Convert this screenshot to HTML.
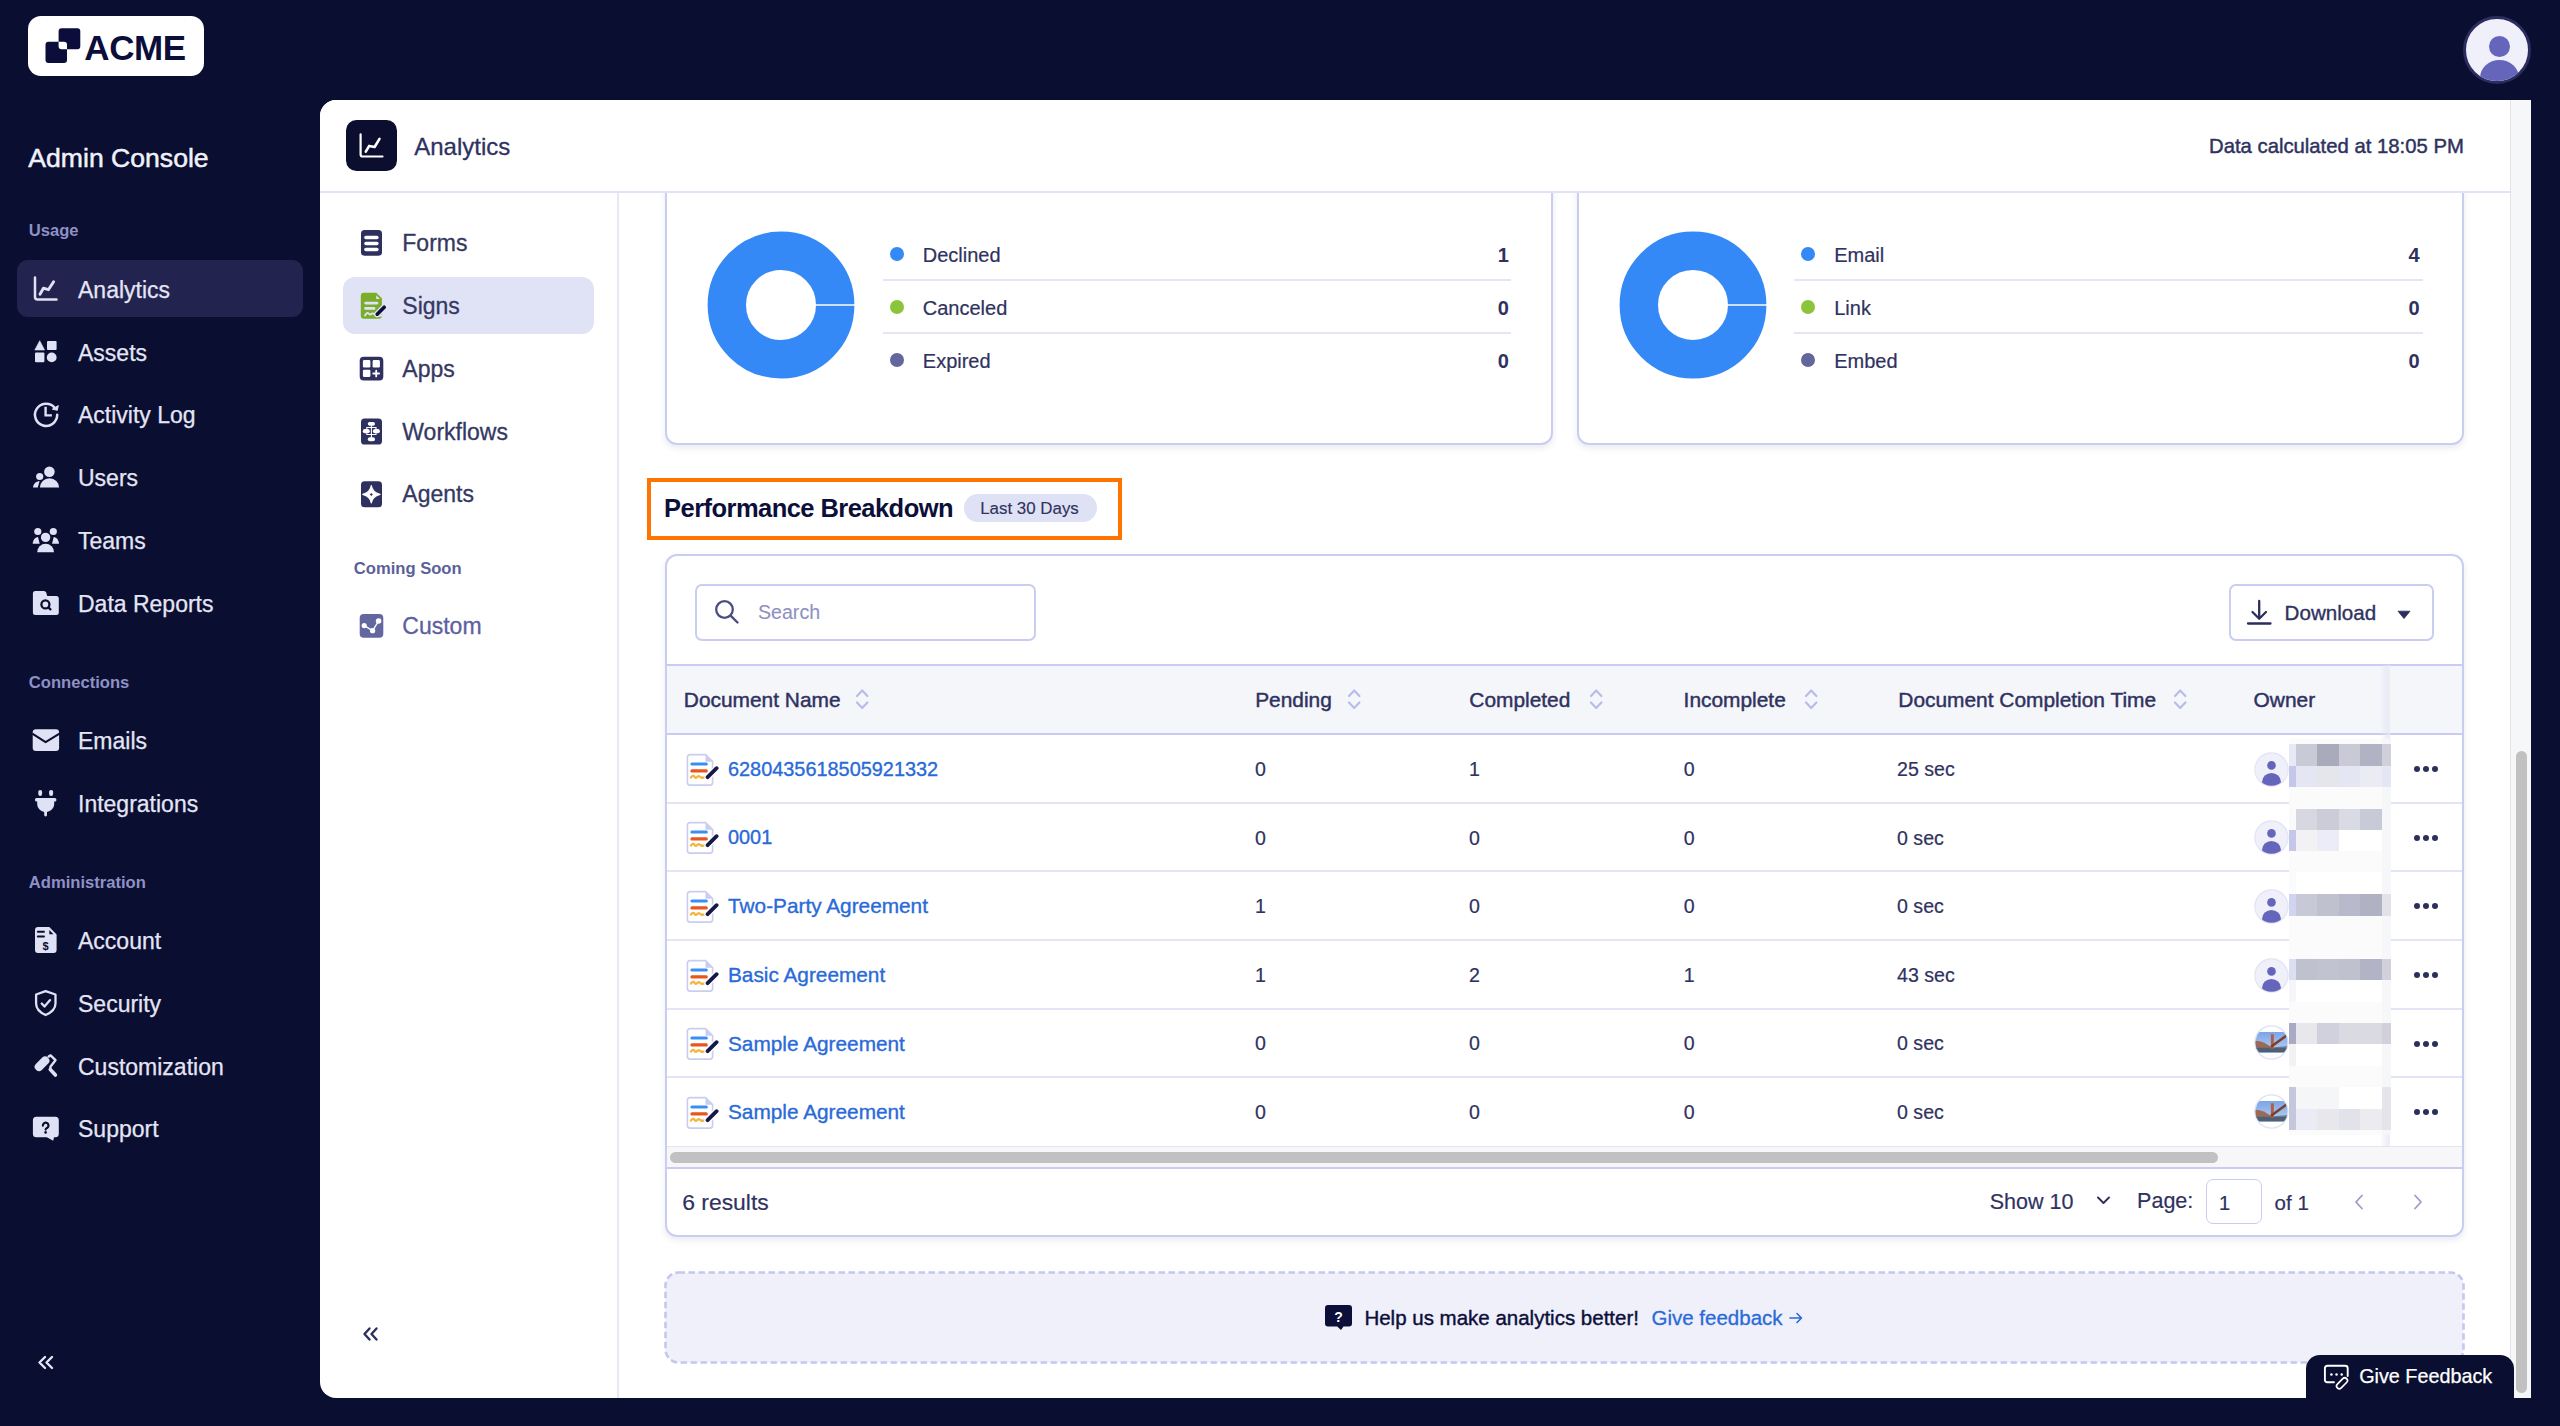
<!DOCTYPE html>
<html><head><meta charset="utf-8">
<style>
*{box-sizing:border-box;margin:0;padding:0}
html,body{width:2560px;height:1426px;overflow:hidden;background:#0a0e30;font-family:"Liberation Sans",sans-serif}
.a{position:absolute}
.t{position:absolute;white-space:nowrap;line-height:1}
</style></head><body>

<div class="a" style="left:28.00px;top:16.00px;width:176.00px;height:60.00px;background:#fff;border-radius:13px;"></div>
<svg class="a" style="left:40px;top:24px" width="50" height="46" viewBox="0 0 50 46"><path fill-rule="evenodd" fill="#0b0e3a" d="M21.6 4.3h15.7a3 3 0 0 1 3 3v15a3 3 0 0 1-3 3h-15.7a3 3 0 0 1-3-3v-15a3 3 0 0 1 3-3z M8.5 17.7h15.5a3 3 0 0 1 3 3v15.3a3 3 0 0 1-3 3h-15.5a3 3 0 0 1-3-3v-15.3a3 3 0 0 1 3-3z"/></svg>
<div class="t " style="top:29.75px;font-size:35px;color:#0b0e3a;left:84.30px;font-weight:700;letter-spacing:-0.4px;">ACME</div>
<div class="a" style="left:2463px;top:16px;width:68px;height:68px;border-radius:50%;background:#f0f0fa;border:3px solid #2c2c5e;overflow:hidden">
  <div class="a" style="left:23px;top:17px;width:21px;height:21px;border-radius:50%;background:#6465bb"></div>
  <div class="a" style="left:14px;top:41px;width:39px;height:36px;border-radius:50%;background:#6465bb"></div>
</div>
<div class="t " style="top:144.70px;font-size:26.6px;color:#f1f1fb;left:28.30px;-webkit-text-stroke:0.5px #f1f1fb;">Admin Console</div>
<div class="t " style="top:223.40px;font-size:16.6px;color:#8f91c6;left:28.80px;font-weight:700;">Usage</div>
<div class="a" style="left:17.00px;top:260.00px;width:286.00px;height:57.00px;background:#22244f;border-radius:11px;"></div>
<div class="t " style="top:278.79px;font-size:23px;color:#e4e5f6;left:78.00px;-webkit-text-stroke:0.25px #e4e5f6;">Analytics</div>
<div class="t " style="top:341.63px;font-size:23px;color:#e4e5f6;left:78.00px;-webkit-text-stroke:0.25px #e4e5f6;">Assets</div>
<div class="t " style="top:404.47px;font-size:23px;color:#e4e5f6;left:78.00px;-webkit-text-stroke:0.25px #e4e5f6;">Activity Log</div>
<div class="t " style="top:467.31px;font-size:23px;color:#e4e5f6;left:78.00px;-webkit-text-stroke:0.25px #e4e5f6;">Users</div>
<div class="t " style="top:530.15px;font-size:23px;color:#e4e5f6;left:78.00px;-webkit-text-stroke:0.25px #e4e5f6;">Teams</div>
<div class="t " style="top:592.99px;font-size:23px;color:#e4e5f6;left:78.00px;-webkit-text-stroke:0.25px #e4e5f6;">Data Reports</div>
<div class="t " style="top:675.10px;font-size:16.6px;color:#8f91c6;left:28.80px;font-weight:700;">Connections</div>
<div class="t " style="top:730.09px;font-size:23px;color:#e4e5f6;left:78.00px;-webkit-text-stroke:0.25px #e4e5f6;">Emails</div>
<div class="t " style="top:793.19px;font-size:23px;color:#e4e5f6;left:78.00px;-webkit-text-stroke:0.25px #e4e5f6;">Integrations</div>
<div class="t " style="top:875.00px;font-size:16.6px;color:#8f91c6;left:28.80px;font-weight:700;">Administration</div>
<div class="t " style="top:930.19px;font-size:23px;color:#e4e5f6;left:78.00px;-webkit-text-stroke:0.25px #e4e5f6;">Account</div>
<div class="t " style="top:992.89px;font-size:23px;color:#e4e5f6;left:78.00px;-webkit-text-stroke:0.25px #e4e5f6;">Security</div>
<div class="t " style="top:1055.59px;font-size:23px;color:#e4e5f6;left:78.00px;-webkit-text-stroke:0.25px #e4e5f6;">Customization</div>
<div class="t " style="top:1118.29px;font-size:23px;color:#e4e5f6;left:78.00px;-webkit-text-stroke:0.25px #e4e5f6;">Support</div>
<svg class="a" style="left:26px;top:270px" width="40" height="40" viewBox="0 0 40 40"><path d="M9 7.5V27a2.5 2.5 0 0 0 2.5 2.5H30.5" fill="none" stroke="#dfe1f4" stroke-width="2.5" stroke-linecap="round"/><path d="M14 24.3L17.4 18.2L22.4 19.7L27.6 11.8" fill="none" stroke="#dfe1f4" stroke-width="2.9" stroke-linecap="round" stroke-linejoin="round"/></svg>
<svg class="a" style="left:26px;top:333px" width="40" height="40" viewBox="0 0 40 40"><path d="M13.7 7.7L18.6 17H8.8Z" fill="#dfe1f4" stroke="#dfe1f4" stroke-width="0.6" stroke-linejoin="round"/><rect x="21" y="7.9" width="9.6" height="9.2" rx="1" fill="#dfe1f4"/><rect x="9" y="19.6" width="9.4" height="9.6" rx="1" fill="#dfe1f4"/><circle cx="25.7" cy="24.4" r="4.9" fill="#dfe1f4"/></svg>
<svg class="a" style="left:26px;top:396px" width="40" height="40" viewBox="0 0 40 40"><path d="M31.2 18.8A11.1 11.1 0 1 1 28.4 11.4" fill="none" stroke="#dfe1f4" stroke-width="2.5" stroke-linecap="round"/><path d="M32.3 9.6L31.3 14.3L26.4 13.2Z" fill="#dfe1f4" stroke="#dfe1f4" stroke-width="1" stroke-linejoin="round"/><path d="M19.6 12V19.4H24.7" fill="none" stroke="#dfe1f4" stroke-width="2.4" stroke-linecap="square"/></svg>
<svg class="a" style="left:26px;top:459px" width="40" height="40" viewBox="0 0 40 40"><circle cx="23.4" cy="12.8" r="5.3" fill="#dfe1f4"/><path d="M13.9 28.6A9.6 9.4 0 0 1 33.1 28.6Z" fill="#dfe1f4"/><circle cx="13.7" cy="17.5" r="3.6" fill="#dfe1f4"/><path d="M7 28.6C7.3 25 9.8 22.5 13.6 22.1L11.8 28.6Z" fill="#dfe1f4"/></svg>
<svg class="a" style="left:26px;top:522px" width="40" height="40" viewBox="0 0 40 40"><circle cx="11.8" cy="9.5" r="3.6" fill="#dfe1f4"/><circle cx="27.3" cy="9.5" r="3.6" fill="#dfe1f4"/><circle cx="19.6" cy="15.4" r="4.7" fill="#dfe1f4"/><path d="M11.2 30.2A8.4 8.5 0 0 1 28 30.2Z" fill="#dfe1f4"/><path d="M6.7 21.7C6.9 18 9 15.3 12 15L13.7 21.7Z" fill="#dfe1f4"/><path d="M33 21.7C32.8 18 30.7 15.3 27.7 15L26 21.7Z" fill="#dfe1f4"/></svg>
<svg class="a" style="left:26px;top:585px" width="40" height="40" viewBox="0 0 40 40"><path d="M9.4 5.9H18a2.3 2.3 0 0 1 2.2 1.6L21.2 10.9H30.3a2.5 2.5 0 0 1 2.5 2.5V27.5a2.5 2.5 0 0 1-2.5 2.5H9.4a2.5 2.5 0 0 1-2.5-2.5V8.4a2.5 2.5 0 0 1 2.5-2.5Z" fill="#dfe1f4"/><circle cx="19.4" cy="19.4" r="4" fill="none" stroke="#0b0e2e" stroke-width="2.3"/><path d="M22.5 22.5L24.4 24.4" stroke="#0b0e2e" stroke-width="2.3" stroke-linecap="round"/></svg>
<svg class="a" style="left:26px;top:720px" width="40" height="40" viewBox="0 0 40 40"><rect x="6.7" y="9.3" width="26.4" height="21.6" rx="3.2" fill="#dfe1f4"/><path d="M6.3 13.6L19.6 22.2L33.5 13.6" fill="none" stroke="#0b0e2e" stroke-width="2" stroke-linejoin="round"/></svg>
<svg class="a" style="left:26px;top:783px" width="40" height="40" viewBox="0 0 40 40"><rect x="12.3" y="6.9" width="3.8" height="6" rx="1.9" fill="#dfe1f4"/><rect x="23.1" y="6.9" width="4" height="6" rx="1.9" fill="#dfe1f4"/><rect x="9" y="15.1" width="21.4" height="3.4" rx="1.5" fill="#dfe1f4"/><path d="M11.2 18H28.2V21.5A8.6 7.8 0 0 1 21 28.9V32a1.4 1.4 0 0 1-2.8 0V28.9A8.6 7.8 0 0 1 11.2 21.5Z" fill="#dfe1f4"/></svg>
<svg class="a" style="left:26px;top:920px" width="40" height="40" viewBox="0 0 40 40"><path d="M12 6.9H23.3L30.6 14.6V30.1a3 3 0 0 1-3 3H12a3 3 0 0 1-3-3V9.9a3 3 0 0 1 3-3Z" fill="#dfe1f4"/><path d="M23.3 10.1V14.3H27.5Z" fill="#0b0e2e"/><path d="M11.8 11.8H18M11.8 16.5H18" stroke="#0b0e2e" stroke-width="1.9" stroke-linecap="round"/><text x="19.6" y="30" font-family="Liberation Sans" font-weight="700" font-size="11" fill="#0b0e2e" text-anchor="middle">$</text></svg>
<svg class="a" style="left:26px;top:983px" width="40" height="40" viewBox="0 0 40 40"><path d="M19.6 8.1L10.1 11.5V20.5C10.1 25.5 14.5 29.8 19.6 32C24.7 29.8 29.5 25.5 29.5 20.5V11.5Z" fill="none" stroke="#dfe1f4" stroke-width="2.3" stroke-linejoin="round"/><path d="M15.7 20.5L18.5 23.6L24.1 17.1" fill="none" stroke="#dfe1f4" stroke-width="2.3" stroke-linecap="round" stroke-linejoin="round"/></svg>
<svg class="a" style="left:26px;top:1046px" width="40" height="40" viewBox="0 0 40 40"><rect x="7.5" y="13.5" width="17" height="8.5" rx="4" transform="rotate(-45 16 17.7)" fill="#dfe1f4"/><path d="M22.6 10.6L24.6 9.4L29.5 14.2L24.6 20.6L24 23.5L29.6 29.2" fill="none" stroke="#dfe1f4" stroke-width="2.4" stroke-linecap="round" stroke-linejoin="round"/><path d="M24.3 23.6L29.4 29" stroke="#dfe1f4" stroke-width="3.6" stroke-linecap="round"/></svg>
<svg class="a" style="left:26px;top:1109px" width="40" height="40" viewBox="0 0 40 40"><path d="M10.4 7.7H29.3a3.5 3.5 0 0 1 3.5 3.5V24.7a3.5 3.5 0 0 1-3.5 3.5H28L27.2 31.7L20.8 28.2H10.4a3.5 3.5 0 0 1-3.5-3.5V11.2a3.5 3.5 0 0 1 3.5-3.5Z" fill="#dfe1f4"/><path d="M16.9 16.6A2.8 2.8 0 1 1 21.3 18.8C20.2 19.5 19.6 19.9 19.6 20.6" fill="none" stroke="#0b0e2e" stroke-width="2.2" stroke-linecap="round"/><circle cx="19.6" cy="23.4" r="1.3" fill="#0b0e2e"/></svg>
<svg class="a" style="left:36px;top:1354px" width="20" height="18" viewBox="0 0 20 18"><path d="M9 3L3.5 8.5L9 14M16 3L10.5 8.5L16 14" fill="none" stroke="#e4e5f6" stroke-width="2.4" stroke-linecap="round" stroke-linejoin="round"/></svg>
<div class="a" style="left:320.00px;top:100.00px;width:2211.00px;height:1298.00px;background:#fff;border-radius:16px 0 0 16px;"></div>
<div class="a" style="left:665.00px;top:120.00px;width:887.50px;height:325.00px;background:#fff;border:2px solid #c9cdf0;border-radius:12px;box-shadow:0 3px 6px rgba(40,50,120,0.10);"></div>
<div class="a" style="left:1576.50px;top:120.00px;width:887.50px;height:325.00px;background:#fff;border:2px solid #c9cdf0;border-radius:12px;box-shadow:0 3px 6px rgba(40,50,120,0.10);"></div>
<svg class="a" style="left:705.4px;top:229px" width="152" height="152" viewBox="0 0 152 152"><circle cx="76" cy="76" r="54.2" fill="none" stroke="#3589f6" stroke-width="38.4"/><path d="M110.5 76H150" stroke="#fff" stroke-width="1.5"/></svg>
<svg class="a" style="left:1616.8px;top:229px" width="152" height="152" viewBox="0 0 152 152"><circle cx="76" cy="76" r="54.2" fill="none" stroke="#3589f6" stroke-width="38.4"/><path d="M110.5 76H150" stroke="#fff" stroke-width="1.5"/></svg>
<div class="a" style="left:889.9px;top:246.7px;width:14.2px;height:14.2px;border-radius:50%;background:#3589f7"></div>
<div class="t " style="top:244.80px;font-size:20px;color:#2f3260;left:922.80px;-webkit-text-stroke:0.2px #2f3260;">Declined</div>
<div class="t " style="top:244.80px;font-size:20px;color:#2f3260;right:1051.20px;font-weight:700;">1</div>
<div class="a" style="left:889.9px;top:299.6px;width:14.2px;height:14.2px;border-radius:50%;background:#8cc43c"></div>
<div class="t " style="top:297.70px;font-size:20px;color:#2f3260;left:922.80px;-webkit-text-stroke:0.2px #2f3260;">Canceled</div>
<div class="t " style="top:297.70px;font-size:20px;color:#2f3260;right:1051.20px;font-weight:700;">0</div>
<div class="a" style="left:889.9px;top:352.5px;width:14.2px;height:14.2px;border-radius:50%;background:#64669e"></div>
<div class="t " style="top:350.60px;font-size:20px;color:#2f3260;left:922.80px;-webkit-text-stroke:0.2px #2f3260;">Expired</div>
<div class="t " style="top:350.60px;font-size:20px;color:#2f3260;right:1051.20px;font-weight:700;">0</div>
<div class="a" style="left:883.00px;top:279.10px;width:628.00px;height:2.00px;background:#e4e6f5;"></div>
<div class="a" style="left:883.00px;top:331.70px;width:628.00px;height:2.00px;background:#e4e6f5;"></div>
<div class="a" style="left:1801.3px;top:246.7px;width:14.2px;height:14.2px;border-radius:50%;background:#3589f7"></div>
<div class="t " style="top:244.80px;font-size:20px;color:#2f3260;left:1834.20px;-webkit-text-stroke:0.2px #2f3260;">Email</div>
<div class="t " style="top:244.80px;font-size:20px;color:#2f3260;right:140.40px;font-weight:700;">4</div>
<div class="a" style="left:1801.3px;top:299.6px;width:14.2px;height:14.2px;border-radius:50%;background:#8cc43c"></div>
<div class="t " style="top:297.70px;font-size:20px;color:#2f3260;left:1834.20px;-webkit-text-stroke:0.2px #2f3260;">Link</div>
<div class="t " style="top:297.70px;font-size:20px;color:#2f3260;right:140.40px;font-weight:700;">0</div>
<div class="a" style="left:1801.3px;top:352.5px;width:14.2px;height:14.2px;border-radius:50%;background:#64669e"></div>
<div class="t " style="top:350.60px;font-size:20px;color:#2f3260;left:1834.20px;-webkit-text-stroke:0.2px #2f3260;">Embed</div>
<div class="t " style="top:350.60px;font-size:20px;color:#2f3260;right:140.40px;font-weight:700;">0</div>
<div class="a" style="left:1794.00px;top:279.10px;width:628.50px;height:2.00px;background:#e4e6f5;"></div>
<div class="a" style="left:1794.00px;top:331.70px;width:628.50px;height:2.00px;background:#e4e6f5;"></div>
<div class="a" style="left:320.00px;top:100.00px;width:2190.00px;height:92.00px;background:#fff;border-radius:16px 0 0 0;"></div>
<div class="a" style="left:320.00px;top:191.00px;width:2190.00px;height:2.00px;background:#e1e3f5;"></div>
<div class="a" style="left:346.00px;top:120.00px;width:51.00px;height:51.00px;background:#0b0e2e;border-radius:10.5px;"></div>
<svg class="a" style="left:346px;top:120px" width="51" height="51" viewBox="0 0 51 51"><path d="M14.6 14.4V34.5a2 2 0 0 0 2 2H36.5" fill="none" stroke="#fff" stroke-width="2.2" stroke-linecap="round"/><path d="M19.8 31.6L23.2 25.9L28.6 27L33.5 18.9" fill="none" stroke="#fff" stroke-width="2.6" stroke-linecap="round" stroke-linejoin="round"/></svg>
<div class="t " style="top:134.52px;font-size:24px;color:#2f3260;left:414.20px;-webkit-text-stroke:0.3px #2f3260;">Analytics</div>
<div class="t " style="top:136.06px;font-size:20.3px;color:#2f3260;right:96.20px;-webkit-text-stroke:0.45px #2f3260;">Data calculated at 18:05 PM</div>
<div class="a" style="left:2510.00px;top:100.00px;width:21.00px;height:1298.00px;background:#f6f7f9;border-left:1.5px solid #e4e4e8;"></div>
<div class="a" style="left:2516.20px;top:751.00px;width:10.80px;height:642.00px;background:#c1c1c1;border-radius:6px;"></div>
<div class="a" style="left:617.00px;top:193.00px;width:2.00px;height:1205.00px;background:#e6e8f6;"></div>
<div class="a" style="left:343.00px;top:277.40px;width:251.00px;height:56.80px;background:#e0e3f5;border-radius:12px;"></div>
<div class="t " style="top:231.89px;font-size:23px;color:#343862;left:402.30px;-webkit-text-stroke:0.3px #343862;">Forms</div>
<div class="t " style="top:294.79px;font-size:23px;color:#343862;left:402.30px;-webkit-text-stroke:0.3px #343862;">Signs</div>
<div class="t " style="top:357.69px;font-size:23px;color:#343862;left:402.30px;-webkit-text-stroke:0.3px #343862;">Apps</div>
<div class="t " style="top:420.59px;font-size:23px;color:#343862;left:402.30px;-webkit-text-stroke:0.3px #343862;">Workflows</div>
<div class="t " style="top:483.49px;font-size:23px;color:#343862;left:402.30px;-webkit-text-stroke:0.3px #343862;">Agents</div>
<div class="t " style="top:560.90px;font-size:16.6px;color:#5c5f9a;left:353.80px;font-weight:700;">Coming Soon</div>
<div class="t " style="top:614.99px;font-size:23px;color:#5d60a0;left:402.30px;-webkit-text-stroke:0.3px #5d60a0;">Custom</div>
<svg class="a" style="left:351px;top:223px" width="40" height="40" viewBox="0 0 40 40"><rect x="10" y="6.9" width="21" height="25.9" rx="3.6" fill="#2e3160"/><rect x="13.2" y="12.85" width="14.4" height="3.5" rx="1.75" fill="#fff"/><rect x="13.2" y="18.75" width="14.4" height="3.5" rx="1.75" fill="#fff"/><rect x="13.2" y="24.75" width="14.4" height="3.5" rx="1.75" fill="#fff"/></svg>
<svg class="a" style="left:351px;top:286px" width="40" height="40" viewBox="0 0 40 40"><path d="M13 6.7H25.3L30.9 12.3V29.6a3.2 3.2 0 0 1-3.2 3.2H13a3.2 3.2 0 0 1-3.2-3.2V9.9A3.2 3.2 0 0 1 13 6.7Z" fill="#7aad2a"/><path d="M25.2 9.2V13.1H29Z" fill="#e0e3f5"/><rect x="13.2" y="15.7" width="14.2" height="2.8" rx="1.4" fill="#e0e3f5"/><rect x="13.2" y="21" width="11.2" height="2.8" rx="1.4" fill="#e0e3f5"/><path d="M14 29.5C15.5 27 16.6 26.3 17.6 27.5C18.6 28.8 19.5 28.8 21 27.5C22.5 26.5 23 28.5 25 29.5C27 30.3 29 30 30.8 29.6" fill="none" stroke="#e0e3f5" stroke-width="1.8" stroke-linecap="round"/><path d="M33.2 21.2L26.2 28.2" stroke="#e0e3f5" stroke-width="6.2" stroke-linecap="round"/><path d="M33.2 21.2L26.2 28.2" stroke="#0b0e3a" stroke-width="3.6" stroke-linecap="round"/></svg>
<svg class="a" style="left:351px;top:349px" width="40" height="40" viewBox="0 0 40 40"><rect x="8.7" y="7.7" width="23.6" height="23.7" rx="4" fill="#2e3160"/><rect x="11.9" y="11.1" width="7.5" height="7.4" rx="1.3" fill="#fff"/><rect x="21.6" y="11.1" width="7.3" height="7.4" rx="1.3" fill="#fff"/><rect x="11.9" y="20.8" width="7.5" height="7.2" rx="1.3" fill="#fff"/><path d="M25.2 21.6V27.4M22.3 24.5H28.1" stroke="#fff" stroke-width="1.8" stroke-linecap="round"/></svg>
<svg class="a" style="left:351px;top:412px" width="40" height="40" viewBox="0 0 40 40"><rect x="10" y="6.5" width="21" height="26" rx="3.6" fill="#2e3160"/><rect x="16.8" y="10" width="7.2" height="3.7" rx="1.85" fill="#fff"/><rect x="11.8" y="17.1" width="7" height="4.2" rx="2.1" fill="#fff"/><rect x="21.9" y="17.1" width="7" height="4.2" rx="2.1" fill="#fff"/><rect x="16.8" y="25.2" width="7.2" height="4" rx="2" fill="#fff"/><path d="M20.4 13.5V25.5M15.8 17V15.5H25V17M15.8 21.3V22.5H25V21.3" fill="none" stroke="#fff" stroke-width="1.1"/></svg>
<svg class="a" style="left:351px;top:475px" width="40" height="40" viewBox="0 0 40 40"><rect x="10" y="6.3" width="21" height="26" rx="3.6" fill="#2e3160"/><path d="M20.3 10.7C21 15.5 23.5 18 29 19.4C23.5 20.8 21 23.3 20.3 28C19.6 23.3 17.1 20.8 11.8 19.4C17.1 18 19.6 15.5 20.3 10.7Z" fill="#fff" stroke="#fff" stroke-width="1.2" stroke-linejoin="round"/><path d="M20.3 17.9L21.8 19.4L20.3 20.9L18.8 19.4Z" fill="#2e3160"/></svg>
<svg class="a" style="left:351px;top:606px" width="40" height="40" viewBox="0 0 40 40"><rect x="8.7" y="7.9" width="23.6" height="23.8" rx="4" fill="#6466a0"/><path d="M13.2 19.6L21.6 24.7L27.6 15" fill="none" stroke="#fff" stroke-width="1.4" stroke-linejoin="round"/><circle cx="13.2" cy="19.6" r="2.6" fill="#fff"/><circle cx="21.6" cy="24.7" r="2.6" fill="#fff"/><circle cx="27.6" cy="15" r="2.8" fill="#fff"/></svg>
<svg class="a" style="left:360px;top:1325px" width="22" height="18" viewBox="0 0 22 18"><path d="M9.5 3.5L4.5 9L9.5 14.5M16.5 3.5L11.5 9L16.5 14.5" fill="none" stroke="#2e3160" stroke-width="2.4" stroke-linecap="round" stroke-linejoin="round"/></svg>
<div class="a" style="left:647.00px;top:478.00px;width:475.00px;height:61.50px;border:4.2px solid #ff7300;"></div>
<div class="t " style="top:495.62px;font-size:25.5px;color:#0b0f3a;left:664.10px;font-weight:700;letter-spacing:-0.55px;">Performance Breakdown</div>
<div class="a" style="left:963.70px;top:494.00px;width:133.30px;height:28.00px;background:#dfe1f5;border-radius:14px;"></div>
<div class="t " style="top:501.06px;font-size:16.9px;color:#2f3260;left:980.20px;-webkit-text-stroke:0.15px #2f3260;">Last 30 Days</div>
<div class="a" style="left:665.00px;top:554.00px;width:1799.00px;height:682.50px;background:#fff;border:2px solid #c9cdf0;border-radius:12px;box-shadow:0 3px 6px rgba(40,50,120,0.10);"></div>
<div class="a" style="left:694.50px;top:584.00px;width:341.00px;height:56.50px;background:#fff;border:2px solid #c9cdf0;border-radius:7px;"></div>
<svg class="a" style="left:713px;top:598px" width="28" height="28" viewBox="0 0 28 28"><circle cx="11.5" cy="11.5" r="8.3" fill="none" stroke="#4a4d80" stroke-width="2.3"/><path d="M17.6 17.6L24.5 24.5" stroke="#4a4d80" stroke-width="2.4" stroke-linecap="round"/></svg>
<div class="t " style="top:603.19px;font-size:19.6px;color:#8e91c2;left:758.00px;-webkit-text-stroke:0.1px #8e91c2;">Search</div>
<div class="a" style="left:2229.30px;top:584.00px;width:204.70px;height:56.50px;background:#fff;border:2px solid #c9cdf0;border-radius:7px;"></div>
<svg class="a" style="left:2245px;top:598px" width="30" height="30" viewBox="0 0 30 30"><path d="M14.2 3V20.5M7.5 14L14.2 20.7L21 14" fill="none" stroke="#2c2f5b" stroke-width="2.3" stroke-linecap="round" stroke-linejoin="round"/><path d="M3 25.5H25.5" stroke="#2c2f5b" stroke-width="2.3" stroke-linecap="round"/></svg>
<div class="t " style="top:602.72px;font-size:20.6px;color:#2f3260;left:2284.60px;-webkit-text-stroke:0.35px #2f3260;">Download</div>
<svg class="a" style="left:2396px;top:609px" width="16" height="12" viewBox="0 0 16 12"><path d="M2 2.2H14L8 9.6Z" fill="#2c2f5b" stroke="#2c2f5b" stroke-width="0.8" stroke-linejoin="round"/></svg>
<div class="a" style="left:667.00px;top:663.50px;width:1795.00px;height:71.00px;background:#f5f6fa;"></div>
<div class="a" style="left:667.00px;top:663.50px;width:1795.00px;height:2.00px;background:#c9ccf0;"></div>
<div class="a" style="left:667.00px;top:732.80px;width:1795.00px;height:2.00px;background:#c9ccf0;"></div>
<div class="t " style="top:690.08px;font-size:20.9px;color:#2f3260;left:683.80px;-webkit-text-stroke:0.45px #2f3260;">Document Name</div>
<svg class="a" style="left:854px;top:688px" width="17" height="23" viewBox="0 0 17 23"><path d="M3 8L8.2 2.5L13.4 8M3 14.5L8.2 20L13.4 14.5" fill="none" stroke="#b8bce9" stroke-width="2.2" stroke-linecap="round" stroke-linejoin="round"/></svg>
<div class="t " style="top:690.08px;font-size:20.9px;color:#2f3260;left:1255.20px;-webkit-text-stroke:0.45px #2f3260;">Pending</div>
<svg class="a" style="left:1346px;top:688px" width="17" height="23" viewBox="0 0 17 23"><path d="M3 8L8.2 2.5L13.4 8M3 14.5L8.2 20L13.4 14.5" fill="none" stroke="#b8bce9" stroke-width="2.2" stroke-linecap="round" stroke-linejoin="round"/></svg>
<div class="t " style="top:690.08px;font-size:20.9px;color:#2f3260;left:1469.30px;-webkit-text-stroke:0.45px #2f3260;">Completed</div>
<svg class="a" style="left:1588px;top:688px" width="17" height="23" viewBox="0 0 17 23"><path d="M3 8L8.2 2.5L13.4 8M3 14.5L8.2 20L13.4 14.5" fill="none" stroke="#b8bce9" stroke-width="2.2" stroke-linecap="round" stroke-linejoin="round"/></svg>
<div class="t " style="top:690.08px;font-size:20.9px;color:#2f3260;left:1683.60px;-webkit-text-stroke:0.45px #2f3260;">Incomplete</div>
<svg class="a" style="left:1803px;top:688px" width="17" height="23" viewBox="0 0 17 23"><path d="M3 8L8.2 2.5L13.4 8M3 14.5L8.2 20L13.4 14.5" fill="none" stroke="#b8bce9" stroke-width="2.2" stroke-linecap="round" stroke-linejoin="round"/></svg>
<div class="t " style="top:690.08px;font-size:20.9px;color:#2f3260;left:1898.30px;-webkit-text-stroke:0.45px #2f3260;">Document Completion Time</div>
<svg class="a" style="left:2172px;top:688px" width="17" height="23" viewBox="0 0 17 23"><path d="M3 8L8.2 2.5L13.4 8M3 14.5L8.2 20L13.4 14.5" fill="none" stroke="#b8bce9" stroke-width="2.2" stroke-linecap="round" stroke-linejoin="round"/></svg>
<div class="t " style="top:690.08px;font-size:20.9px;color:#2f3260;left:2253.60px;-webkit-text-stroke:0.45px #2f3260;">Owner</div>
<div class="a" style="left:2380.00px;top:665.00px;width:10.00px;height:502.00px;background:linear-gradient(90deg,rgba(230,232,245,0) 0%,rgba(225,228,244,0.6) 70%,rgba(235,236,240,0.9) 100%);"></div>
<div class="a" style="left:667.00px;top:801.70px;width:1795.00px;height:2.00px;background:#e3e5f6;"></div>
<svg class="a" style="left:685px;top:753.0px" width="34" height="34" viewBox="0 0 34 34"><path d="M5 1.6H20.5L27.6 8.7V29.5a2.6 2.6 0 0 1-2.6 2.6H5a2.6 2.6 0 0 1-2.6-2.6V4.2A2.6 2.6 0 0 1 5 1.6Z" fill="#fff" stroke="#c9cdf0" stroke-width="1.6"/><path d="M20.5 1.6V8.7H27.6Z" fill="#c9cdf0"/><path d="M6.9 11H21.3" stroke="#3a8df5" stroke-width="3.1" stroke-linecap="round"/><path d="M6.9 17.9H21.3" stroke="#e8561d" stroke-width="3.1" stroke-linecap="round"/><path d="M5.9 24.6C7.3 22.6 8.6 22.3 9.6 23.8C10.6 25.3 11.6 25 12.8 23.6C14 22.4 15 24.1 16.3 24.6C17.5 25 18.6 24.7 19.6 24.4" fill="none" stroke="#f5b43c" stroke-width="2.3" stroke-linecap="round"/><path d="M31.6 15.2L22.6 24.2" stroke="#fff" stroke-width="6.4" stroke-linecap="round"/><path d="M31.6 15.2L22.6 24.2" stroke="#151848" stroke-width="3.8" stroke-linecap="round"/></svg>
<div class="t " style="top:760.05px;font-size:19.9px;color:#2a6ad8;left:728.00px;-webkit-text-stroke:0.35px #2a6ad8;">6280435618505921332</div>
<div class="t " style="top:760.19px;font-size:19.6px;color:#2f3260;left:1255.00px;-webkit-text-stroke:0.2px #2f3260;">0</div>
<div class="t " style="top:760.19px;font-size:19.6px;color:#2f3260;left:1469.00px;-webkit-text-stroke:0.2px #2f3260;">1</div>
<div class="t " style="top:760.19px;font-size:19.6px;color:#2f3260;left:1683.80px;-webkit-text-stroke:0.2px #2f3260;">0</div>
<div class="t " style="top:760.19px;font-size:19.6px;color:#2f3260;left:1897.00px;-webkit-text-stroke:0.2px #2f3260;">25 sec</div>
<svg class="a" style="left:2254px;top:751.9px" width="36" height="36" viewBox="0 0 36 36"><defs><clipPath id="oc0"><circle cx="17.5" cy="17.5" r="16.2"/></clipPath></defs><circle cx="17.5" cy="17.5" r="16.6" fill="#f0f0fa" stroke="#e2e3f4" stroke-width="1.2"/><g clip-path="url(#oc0)"><circle cx="17.5" cy="13.4" r="4.3" fill="#6465bb"/><ellipse cx="17.5" cy="29.5" rx="9.4" ry="8.6" fill="#6465bb"/></g></svg>
<div class="a" style="left:2414.0px;top:766.3px;width:6.2px;height:6.2px;border-radius:50%;background:#2c2f5b"></div>
<div class="a" style="left:2423.1px;top:766.3px;width:6.2px;height:6.2px;border-radius:50%;background:#2c2f5b"></div>
<div class="a" style="left:2432.2px;top:766.3px;width:6.2px;height:6.2px;border-radius:50%;background:#2c2f5b"></div>
<div class="a" style="left:667.00px;top:870.20px;width:1795.00px;height:2.00px;background:#e3e5f6;"></div>
<svg class="a" style="left:685px;top:821.4px" width="34" height="34" viewBox="0 0 34 34"><path d="M5 1.6H20.5L27.6 8.7V29.5a2.6 2.6 0 0 1-2.6 2.6H5a2.6 2.6 0 0 1-2.6-2.6V4.2A2.6 2.6 0 0 1 5 1.6Z" fill="#fff" stroke="#c9cdf0" stroke-width="1.6"/><path d="M20.5 1.6V8.7H27.6Z" fill="#c9cdf0"/><path d="M6.9 11H21.3" stroke="#3a8df5" stroke-width="3.1" stroke-linecap="round"/><path d="M6.9 17.9H21.3" stroke="#e8561d" stroke-width="3.1" stroke-linecap="round"/><path d="M5.9 24.6C7.3 22.6 8.6 22.3 9.6 23.8C10.6 25.3 11.6 25 12.8 23.6C14 22.4 15 24.1 16.3 24.6C17.5 25 18.6 24.7 19.6 24.4" fill="none" stroke="#f5b43c" stroke-width="2.3" stroke-linecap="round"/><path d="M31.6 15.2L22.6 24.2" stroke="#fff" stroke-width="6.4" stroke-linecap="round"/><path d="M31.6 15.2L22.6 24.2" stroke="#151848" stroke-width="3.8" stroke-linecap="round"/></svg>
<div class="t " style="top:828.40px;font-size:19.9px;color:#2a6ad8;left:728.00px;-webkit-text-stroke:0.35px #2a6ad8;">0001</div>
<div class="t " style="top:828.54px;font-size:19.6px;color:#2f3260;left:1255.00px;-webkit-text-stroke:0.2px #2f3260;">0</div>
<div class="t " style="top:828.54px;font-size:19.6px;color:#2f3260;left:1469.00px;-webkit-text-stroke:0.2px #2f3260;">0</div>
<div class="t " style="top:828.54px;font-size:19.6px;color:#2f3260;left:1683.80px;-webkit-text-stroke:0.2px #2f3260;">0</div>
<div class="t " style="top:828.54px;font-size:19.6px;color:#2f3260;left:1897.00px;-webkit-text-stroke:0.2px #2f3260;">0 sec</div>
<svg class="a" style="left:2254px;top:820.2px" width="36" height="36" viewBox="0 0 36 36"><defs><clipPath id="oc1"><circle cx="17.5" cy="17.5" r="16.2"/></clipPath></defs><circle cx="17.5" cy="17.5" r="16.6" fill="#f0f0fa" stroke="#e2e3f4" stroke-width="1.2"/><g clip-path="url(#oc1)"><circle cx="17.5" cy="13.4" r="4.3" fill="#6465bb"/><ellipse cx="17.5" cy="29.5" rx="9.4" ry="8.6" fill="#6465bb"/></g></svg>
<div class="a" style="left:2414.0px;top:834.6px;width:6.2px;height:6.2px;border-radius:50%;background:#2c2f5b"></div>
<div class="a" style="left:2423.1px;top:834.6px;width:6.2px;height:6.2px;border-radius:50%;background:#2c2f5b"></div>
<div class="a" style="left:2432.2px;top:834.6px;width:6.2px;height:6.2px;border-radius:50%;background:#2c2f5b"></div>
<div class="a" style="left:667.00px;top:939.00px;width:1795.00px;height:2.00px;background:#e3e5f6;"></div>
<svg class="a" style="left:685px;top:890.0px" width="34" height="34" viewBox="0 0 34 34"><path d="M5 1.6H20.5L27.6 8.7V29.5a2.6 2.6 0 0 1-2.6 2.6H5a2.6 2.6 0 0 1-2.6-2.6V4.2A2.6 2.6 0 0 1 5 1.6Z" fill="#fff" stroke="#c9cdf0" stroke-width="1.6"/><path d="M20.5 1.6V8.7H27.6Z" fill="#c9cdf0"/><path d="M6.9 11H21.3" stroke="#3a8df5" stroke-width="3.1" stroke-linecap="round"/><path d="M6.9 17.9H21.3" stroke="#e8561d" stroke-width="3.1" stroke-linecap="round"/><path d="M5.9 24.6C7.3 22.6 8.6 22.3 9.6 23.8C10.6 25.3 11.6 25 12.8 23.6C14 22.4 15 24.1 16.3 24.6C17.5 25 18.6 24.7 19.6 24.4" fill="none" stroke="#f5b43c" stroke-width="2.3" stroke-linecap="round"/><path d="M31.6 15.2L22.6 24.2" stroke="#fff" stroke-width="6.4" stroke-linecap="round"/><path d="M31.6 15.2L22.6 24.2" stroke="#151848" stroke-width="3.8" stroke-linecap="round"/></svg>
<div class="t " style="top:896.22px;font-size:20.8px;color:#2a6ad8;left:728.00px;-webkit-text-stroke:0.35px #2a6ad8;">Two-Party Agreement</div>
<div class="t " style="top:897.19px;font-size:19.6px;color:#2f3260;left:1255.00px;-webkit-text-stroke:0.2px #2f3260;">1</div>
<div class="t " style="top:897.19px;font-size:19.6px;color:#2f3260;left:1469.00px;-webkit-text-stroke:0.2px #2f3260;">0</div>
<div class="t " style="top:897.19px;font-size:19.6px;color:#2f3260;left:1683.80px;-webkit-text-stroke:0.2px #2f3260;">0</div>
<div class="t " style="top:897.19px;font-size:19.6px;color:#2f3260;left:1897.00px;-webkit-text-stroke:0.2px #2f3260;">0 sec</div>
<svg class="a" style="left:2254px;top:888.9px" width="36" height="36" viewBox="0 0 36 36"><defs><clipPath id="oc2"><circle cx="17.5" cy="17.5" r="16.2"/></clipPath></defs><circle cx="17.5" cy="17.5" r="16.6" fill="#f0f0fa" stroke="#e2e3f4" stroke-width="1.2"/><g clip-path="url(#oc2)"><circle cx="17.5" cy="13.4" r="4.3" fill="#6465bb"/><ellipse cx="17.5" cy="29.5" rx="9.4" ry="8.6" fill="#6465bb"/></g></svg>
<div class="a" style="left:2414.0px;top:903.3px;width:6.2px;height:6.2px;border-radius:50%;background:#2c2f5b"></div>
<div class="a" style="left:2423.1px;top:903.3px;width:6.2px;height:6.2px;border-radius:50%;background:#2c2f5b"></div>
<div class="a" style="left:2432.2px;top:903.3px;width:6.2px;height:6.2px;border-radius:50%;background:#2c2f5b"></div>
<div class="a" style="left:667.00px;top:1007.60px;width:1795.00px;height:2.00px;background:#e3e5f6;"></div>
<svg class="a" style="left:685px;top:958.7px" width="34" height="34" viewBox="0 0 34 34"><path d="M5 1.6H20.5L27.6 8.7V29.5a2.6 2.6 0 0 1-2.6 2.6H5a2.6 2.6 0 0 1-2.6-2.6V4.2A2.6 2.6 0 0 1 5 1.6Z" fill="#fff" stroke="#c9cdf0" stroke-width="1.6"/><path d="M20.5 1.6V8.7H27.6Z" fill="#c9cdf0"/><path d="M6.9 11H21.3" stroke="#3a8df5" stroke-width="3.1" stroke-linecap="round"/><path d="M6.9 17.9H21.3" stroke="#e8561d" stroke-width="3.1" stroke-linecap="round"/><path d="M5.9 24.6C7.3 22.6 8.6 22.3 9.6 23.8C10.6 25.3 11.6 25 12.8 23.6C14 22.4 15 24.1 16.3 24.6C17.5 25 18.6 24.7 19.6 24.4" fill="none" stroke="#f5b43c" stroke-width="2.3" stroke-linecap="round"/><path d="M31.6 15.2L22.6 24.2" stroke="#fff" stroke-width="6.4" stroke-linecap="round"/><path d="M31.6 15.2L22.6 24.2" stroke="#151848" stroke-width="3.8" stroke-linecap="round"/></svg>
<div class="t " style="top:964.92px;font-size:20.8px;color:#2a6ad8;left:728.00px;-webkit-text-stroke:0.35px #2a6ad8;">Basic Agreement</div>
<div class="t " style="top:965.89px;font-size:19.6px;color:#2f3260;left:1255.00px;-webkit-text-stroke:0.2px #2f3260;">1</div>
<div class="t " style="top:965.89px;font-size:19.6px;color:#2f3260;left:1469.00px;-webkit-text-stroke:0.2px #2f3260;">2</div>
<div class="t " style="top:965.89px;font-size:19.6px;color:#2f3260;left:1683.80px;-webkit-text-stroke:0.2px #2f3260;">1</div>
<div class="t " style="top:965.89px;font-size:19.6px;color:#2f3260;left:1897.00px;-webkit-text-stroke:0.2px #2f3260;">43 sec</div>
<svg class="a" style="left:2254px;top:957.6px" width="36" height="36" viewBox="0 0 36 36"><defs><clipPath id="oc3"><circle cx="17.5" cy="17.5" r="16.2"/></clipPath></defs><circle cx="17.5" cy="17.5" r="16.6" fill="#f0f0fa" stroke="#e2e3f4" stroke-width="1.2"/><g clip-path="url(#oc3)"><circle cx="17.5" cy="13.4" r="4.3" fill="#6465bb"/><ellipse cx="17.5" cy="29.5" rx="9.4" ry="8.6" fill="#6465bb"/></g></svg>
<div class="a" style="left:2414.0px;top:972.0px;width:6.2px;height:6.2px;border-radius:50%;background:#2c2f5b"></div>
<div class="a" style="left:2423.1px;top:972.0px;width:6.2px;height:6.2px;border-radius:50%;background:#2c2f5b"></div>
<div class="a" style="left:2432.2px;top:972.0px;width:6.2px;height:6.2px;border-radius:50%;background:#2c2f5b"></div>
<div class="a" style="left:667.00px;top:1076.20px;width:1795.00px;height:2.00px;background:#e3e5f6;"></div>
<svg class="a" style="left:685px;top:1027.3px" width="34" height="34" viewBox="0 0 34 34"><path d="M5 1.6H20.5L27.6 8.7V29.5a2.6 2.6 0 0 1-2.6 2.6H5a2.6 2.6 0 0 1-2.6-2.6V4.2A2.6 2.6 0 0 1 5 1.6Z" fill="#fff" stroke="#c9cdf0" stroke-width="1.6"/><path d="M20.5 1.6V8.7H27.6Z" fill="#c9cdf0"/><path d="M6.9 11H21.3" stroke="#3a8df5" stroke-width="3.1" stroke-linecap="round"/><path d="M6.9 17.9H21.3" stroke="#e8561d" stroke-width="3.1" stroke-linecap="round"/><path d="M5.9 24.6C7.3 22.6 8.6 22.3 9.6 23.8C10.6 25.3 11.6 25 12.8 23.6C14 22.4 15 24.1 16.3 24.6C17.5 25 18.6 24.7 19.6 24.4" fill="none" stroke="#f5b43c" stroke-width="2.3" stroke-linecap="round"/><path d="M31.6 15.2L22.6 24.2" stroke="#fff" stroke-width="6.4" stroke-linecap="round"/><path d="M31.6 15.2L22.6 24.2" stroke="#151848" stroke-width="3.8" stroke-linecap="round"/></svg>
<div class="t " style="top:1033.52px;font-size:20.8px;color:#2a6ad8;left:728.00px;-webkit-text-stroke:0.35px #2a6ad8;">Sample Agreement</div>
<div class="t " style="top:1034.49px;font-size:19.6px;color:#2f3260;left:1255.00px;-webkit-text-stroke:0.2px #2f3260;">0</div>
<div class="t " style="top:1034.49px;font-size:19.6px;color:#2f3260;left:1469.00px;-webkit-text-stroke:0.2px #2f3260;">0</div>
<div class="t " style="top:1034.49px;font-size:19.6px;color:#2f3260;left:1683.80px;-webkit-text-stroke:0.2px #2f3260;">0</div>
<div class="t " style="top:1034.49px;font-size:19.6px;color:#2f3260;left:1897.00px;-webkit-text-stroke:0.2px #2f3260;">0 sec</div>
<svg class="a" style="left:2254px;top:1025.4px" width="36" height="36" viewBox="0 0 36 36"><defs><clipPath id="oc4"><circle cx="17.5" cy="17.5" r="16"/></clipPath><linearGradient id="sky4" x1="0" y1="0" x2="0" y2="1"><stop offset="0" stop-color="#7aa5e6"/><stop offset="1" stop-color="#b8d2f6"/></linearGradient></defs><circle cx="17.5" cy="17.5" r="16.6" fill="#fff" stroke="#dfe0f3" stroke-width="1.2"/><g clip-path="url(#oc4)"><rect x="0" y="7" width="36" height="20.5" fill="url(#sky4)"/><path d="M0 15.8C6 15.2 12 18 17.5 22.3V24H0Z" fill="#9a6a57"/><path d="M20 22.3L36 20.8V24H20Z" fill="#7d8088"/><rect x="0" y="22.8" width="36" height="4.7" fill="#4e6078"/><rect x="16.9" y="9.3" width="2.9" height="14.5" fill="#b45d40"/><path d="M17 21.8L34 9.5" stroke="#7d3f2d" stroke-width="2.6"/></g></svg>
<div class="a" style="left:2414.0px;top:1040.6px;width:6.2px;height:6.2px;border-radius:50%;background:#2c2f5b"></div>
<div class="a" style="left:2423.1px;top:1040.6px;width:6.2px;height:6.2px;border-radius:50%;background:#2c2f5b"></div>
<div class="a" style="left:2432.2px;top:1040.6px;width:6.2px;height:6.2px;border-radius:50%;background:#2c2f5b"></div>
<svg class="a" style="left:685px;top:1096.0px" width="34" height="34" viewBox="0 0 34 34"><path d="M5 1.6H20.5L27.6 8.7V29.5a2.6 2.6 0 0 1-2.6 2.6H5a2.6 2.6 0 0 1-2.6-2.6V4.2A2.6 2.6 0 0 1 5 1.6Z" fill="#fff" stroke="#c9cdf0" stroke-width="1.6"/><path d="M20.5 1.6V8.7H27.6Z" fill="#c9cdf0"/><path d="M6.9 11H21.3" stroke="#3a8df5" stroke-width="3.1" stroke-linecap="round"/><path d="M6.9 17.9H21.3" stroke="#e8561d" stroke-width="3.1" stroke-linecap="round"/><path d="M5.9 24.6C7.3 22.6 8.6 22.3 9.6 23.8C10.6 25.3 11.6 25 12.8 23.6C14 22.4 15 24.1 16.3 24.6C17.5 25 18.6 24.7 19.6 24.4" fill="none" stroke="#f5b43c" stroke-width="2.3" stroke-linecap="round"/><path d="M31.6 15.2L22.6 24.2" stroke="#fff" stroke-width="6.4" stroke-linecap="round"/><path d="M31.6 15.2L22.6 24.2" stroke="#151848" stroke-width="3.8" stroke-linecap="round"/></svg>
<div class="t " style="top:1102.22px;font-size:20.8px;color:#2a6ad8;left:728.00px;-webkit-text-stroke:0.35px #2a6ad8;">Sample Agreement</div>
<div class="t " style="top:1103.19px;font-size:19.6px;color:#2f3260;left:1255.00px;-webkit-text-stroke:0.2px #2f3260;">0</div>
<div class="t " style="top:1103.19px;font-size:19.6px;color:#2f3260;left:1469.00px;-webkit-text-stroke:0.2px #2f3260;">0</div>
<div class="t " style="top:1103.19px;font-size:19.6px;color:#2f3260;left:1683.80px;-webkit-text-stroke:0.2px #2f3260;">0</div>
<div class="t " style="top:1103.19px;font-size:19.6px;color:#2f3260;left:1897.00px;-webkit-text-stroke:0.2px #2f3260;">0 sec</div>
<svg class="a" style="left:2254px;top:1094.1px" width="36" height="36" viewBox="0 0 36 36"><defs><clipPath id="oc5"><circle cx="17.5" cy="17.5" r="16"/></clipPath><linearGradient id="sky5" x1="0" y1="0" x2="0" y2="1"><stop offset="0" stop-color="#7aa5e6"/><stop offset="1" stop-color="#b8d2f6"/></linearGradient></defs><circle cx="17.5" cy="17.5" r="16.6" fill="#fff" stroke="#dfe0f3" stroke-width="1.2"/><g clip-path="url(#oc5)"><rect x="0" y="7" width="36" height="20.5" fill="url(#sky5)"/><path d="M0 15.8C6 15.2 12 18 17.5 22.3V24H0Z" fill="#9a6a57"/><path d="M20 22.3L36 20.8V24H20Z" fill="#7d8088"/><rect x="0" y="22.8" width="36" height="4.7" fill="#4e6078"/><rect x="16.9" y="9.3" width="2.9" height="14.5" fill="#b45d40"/><path d="M17 21.8L34 9.5" stroke="#7d3f2d" stroke-width="2.6"/></g></svg>
<div class="a" style="left:2414.0px;top:1109.3px;width:6.2px;height:6.2px;border-radius:50%;background:#2c2f5b"></div>
<div class="a" style="left:2423.1px;top:1109.3px;width:6.2px;height:6.2px;border-radius:50%;background:#2c2f5b"></div>
<div class="a" style="left:2432.2px;top:1109.3px;width:6.2px;height:6.2px;border-radius:50%;background:#2c2f5b"></div>
<div class="a" style="left:2289.2px;top:738.8px;width:101.4px;height:396.4px;background:#fbfbfc"></div>
<div class="a" style="left:2381.6px;top:738.8px;width:9.0px;height:396.4px;background:#f6f7f9"></div>
<div class="a" style="left:2289.2px;top:744.4px;width:6.7px;height:21.4px;background:#e8e9f6"></div>
<div class="a" style="left:2295.9px;top:744.4px;width:21.0px;height:21.4px;background:#c9cad6"></div>
<div class="a" style="left:2316.9px;top:744.4px;width:21.7px;height:21.4px;background:#a9abbd"></div>
<div class="a" style="left:2338.6px;top:744.4px;width:21.4px;height:21.4px;background:#c9cad6"></div>
<div class="a" style="left:2360.0px;top:744.4px;width:21.6px;height:21.4px;background:#b1b3c5"></div>
<div class="a" style="left:2381.6px;top:744.4px;width:9.0px;height:21.4px;background:#cfd0da"></div>
<div class="a" style="left:2289.2px;top:765.8px;width:6.7px;height:20.9px;background:#c4c7ea"></div>
<div class="a" style="left:2295.9px;top:765.8px;width:21.0px;height:20.9px;background:#e4e6f4"></div>
<div class="a" style="left:2316.9px;top:765.8px;width:21.7px;height:20.9px;background:#e5e6ec"></div>
<div class="a" style="left:2338.6px;top:765.8px;width:21.4px;height:20.9px;background:#e4e6f4"></div>
<div class="a" style="left:2360.0px;top:765.8px;width:21.6px;height:20.9px;background:#ebebf4"></div>
<div class="a" style="left:2381.6px;top:765.8px;width:9.0px;height:20.9px;background:#e4e6f4"></div>
<div class="a" style="left:2289.2px;top:808.8px;width:6.7px;height:21.3px;background:#fafafa"></div>
<div class="a" style="left:2295.9px;top:808.8px;width:21.0px;height:21.3px;background:#d6d7e0"></div>
<div class="a" style="left:2316.9px;top:808.8px;width:21.7px;height:21.3px;background:#cbccd8"></div>
<div class="a" style="left:2338.6px;top:808.8px;width:21.4px;height:21.3px;background:#d9dae3"></div>
<div class="a" style="left:2360.0px;top:808.8px;width:21.6px;height:21.3px;background:#c8cad8"></div>
<div class="a" style="left:2289.2px;top:830.1px;width:6.7px;height:21.4px;background:#c4c7ea"></div>
<div class="a" style="left:2295.9px;top:830.1px;width:21.0px;height:21.4px;background:#f2f2f4"></div>
<div class="a" style="left:2316.9px;top:830.1px;width:21.7px;height:21.4px;background:#ececf8"></div>
<div class="a" style="left:2338.6px;top:830.1px;width:21.4px;height:21.4px;background:#ffffff"></div>
<div class="a" style="left:2360.0px;top:830.1px;width:21.6px;height:21.4px;background:#ffffff"></div>
<div class="a" style="left:2289.2px;top:872.1px;width:6.7px;height:22.1px;background:#fafbfc"></div>
<div class="a" style="left:2295.9px;top:872.1px;width:21.0px;height:22.1px;background:#ffffff"></div>
<div class="a" style="left:2316.9px;top:872.1px;width:21.7px;height:22.1px;background:#ffffff"></div>
<div class="a" style="left:2338.6px;top:872.1px;width:21.4px;height:22.1px;background:#ffffff"></div>
<div class="a" style="left:2360.0px;top:872.1px;width:21.6px;height:22.1px;background:#ffffff"></div>
<div class="a" style="left:2289.2px;top:894.2px;width:6.7px;height:21.4px;background:#d0d4f0"></div>
<div class="a" style="left:2295.9px;top:894.2px;width:21.0px;height:21.4px;background:#c8c9d6"></div>
<div class="a" style="left:2316.9px;top:894.2px;width:21.7px;height:21.4px;background:#bfc1cf"></div>
<div class="a" style="left:2338.6px;top:894.2px;width:21.4px;height:21.4px;background:#b8bacb"></div>
<div class="a" style="left:2360.0px;top:894.2px;width:21.6px;height:21.4px;background:#b0b2c4"></div>
<div class="a" style="left:2381.6px;top:894.2px;width:9.0px;height:21.4px;background:#e2e2e8"></div>
<div class="a" style="left:2289.2px;top:959.0px;width:6.7px;height:21.2px;background:#dcdef2"></div>
<div class="a" style="left:2295.9px;top:959.0px;width:21.0px;height:21.2px;background:#bfc1cf"></div>
<div class="a" style="left:2316.9px;top:959.0px;width:21.7px;height:21.2px;background:#c1c3d0"></div>
<div class="a" style="left:2338.6px;top:959.0px;width:21.4px;height:21.2px;background:#bfc1cf"></div>
<div class="a" style="left:2360.0px;top:959.0px;width:21.6px;height:21.2px;background:#b2b4c5"></div>
<div class="a" style="left:2381.6px;top:959.0px;width:9.0px;height:21.2px;background:#d0d1da"></div>
<div class="a" style="left:2289.2px;top:980.2px;width:6.7px;height:21.6px;background:#f5f6f9"></div>
<div class="a" style="left:2295.9px;top:980.2px;width:21.0px;height:21.6px;background:#ffffff"></div>
<div class="a" style="left:2316.9px;top:980.2px;width:21.7px;height:21.6px;background:#ffffff"></div>
<div class="a" style="left:2338.6px;top:980.2px;width:21.4px;height:21.6px;background:#ffffff"></div>
<div class="a" style="left:2360.0px;top:980.2px;width:21.6px;height:21.6px;background:#ffffff"></div>
<div class="a" style="left:2289.2px;top:1023.4px;width:6.7px;height:20.8px;background:#a9abc4"></div>
<div class="a" style="left:2295.9px;top:1023.4px;width:21.0px;height:20.8px;background:#e8e8ec"></div>
<div class="a" style="left:2316.9px;top:1023.4px;width:21.7px;height:20.8px;background:#d0d1dc"></div>
<div class="a" style="left:2338.6px;top:1023.4px;width:21.4px;height:20.8px;background:#d9dae2"></div>
<div class="a" style="left:2360.0px;top:1023.4px;width:21.6px;height:20.8px;background:#d9dae2"></div>
<div class="a" style="left:2381.6px;top:1023.4px;width:9.0px;height:20.8px;background:#d0d1da"></div>
<div class="a" style="left:2289.2px;top:1044.2px;width:6.7px;height:21.6px;background:#f2f2f4"></div>
<div class="a" style="left:2295.9px;top:1044.2px;width:21.0px;height:21.6px;background:#ffffff"></div>
<div class="a" style="left:2316.9px;top:1044.2px;width:21.7px;height:21.6px;background:#ffffff"></div>
<div class="a" style="left:2338.6px;top:1044.2px;width:21.4px;height:21.6px;background:#ffffff"></div>
<div class="a" style="left:2360.0px;top:1044.2px;width:21.6px;height:21.6px;background:#ffffff"></div>
<div class="a" style="left:2289.2px;top:1087.4px;width:6.7px;height:21.6px;background:#c5c7dc"></div>
<div class="a" style="left:2295.9px;top:1087.4px;width:21.0px;height:21.6px;background:#f5f6f8"></div>
<div class="a" style="left:2316.9px;top:1087.4px;width:21.7px;height:21.6px;background:#f5f6f8"></div>
<div class="a" style="left:2338.6px;top:1087.4px;width:21.4px;height:21.6px;background:#ffffff"></div>
<div class="a" style="left:2360.0px;top:1087.4px;width:21.6px;height:21.6px;background:#ffffff"></div>
<div class="a" style="left:2381.6px;top:1087.4px;width:9.0px;height:21.6px;background:#e4e5ea"></div>
<div class="a" style="left:2289.2px;top:1109.0px;width:6.7px;height:20.8px;background:#c5c7dc"></div>
<div class="a" style="left:2295.9px;top:1109.0px;width:21.0px;height:20.8px;background:#ebebf6"></div>
<div class="a" style="left:2316.9px;top:1109.0px;width:21.7px;height:20.8px;background:#e8e8ec"></div>
<div class="a" style="left:2338.6px;top:1109.0px;width:21.4px;height:20.8px;background:#e2e3ea"></div>
<div class="a" style="left:2360.0px;top:1109.0px;width:21.6px;height:20.8px;background:#ececf0"></div>
<div class="a" style="left:2381.6px;top:1109.0px;width:9.0px;height:20.8px;background:#e4e5ea"></div>
<div class="a" style="left:667.00px;top:1146.00px;width:1795.00px;height:21.00px;background:#f7f7f9;"></div>
<div class="a" style="left:667.00px;top:1145.50px;width:1795.00px;height:1.50px;background:#e4e4ea;"></div>
<div class="a" style="left:670.00px;top:1151.50px;width:1548.00px;height:11.50px;background:#c1c1c1;border-radius:6px;"></div>
<div class="a" style="left:667.00px;top:1166.50px;width:1795.00px;height:2.50px;background:#c9ccf0;"></div>
<div class="t " style="top:1190.94px;font-size:22.9px;color:#2f3260;left:682.20px;-webkit-text-stroke:0.2px #2f3260;">6 results</div>
<div class="t " style="top:1192.10px;font-size:21.5px;color:#2f3260;left:1989.70px;-webkit-text-stroke:0.2px #2f3260;">Show 10</div>
<svg class="a" style="left:2095px;top:1194px" width="17" height="14" viewBox="0 0 17 14"><path d="M3 3.5L8.5 9L14 3.5" fill="none" stroke="#2c2f5b" stroke-width="1.9" stroke-linecap="round" stroke-linejoin="round"/></svg>
<div class="t " style="top:1190.69px;font-size:21.5px;color:#2f3260;left:2137.10px;-webkit-text-stroke:0.2px #2f3260;">Page:</div>
<div class="a" style="left:2206.40px;top:1179.30px;width:56.10px;height:44.90px;background:#fff;border:1.6px solid #c9cdf0;border-radius:7px;"></div>
<div class="t " style="top:1192.80px;font-size:20px;color:#2f3260;left:2219.00px;-webkit-text-stroke:0.2px #2f3260;">1</div>
<div class="t " style="top:1192.57px;font-size:20.5px;color:#2f3260;left:2274.60px;-webkit-text-stroke:0.2px #2f3260;">of 1</div>
<svg class="a" style="left:2352px;top:1192px" width="14" height="20" viewBox="0 0 14 20"><path d="M10 3.5L4 10L10 16.5" fill="none" stroke="#9a9dc8" stroke-width="1.8" stroke-linecap="round" stroke-linejoin="round"/></svg>
<svg class="a" style="left:2411px;top:1192px" width="14" height="20" viewBox="0 0 14 20"><path d="M4 3.5L10 10L4 16.5" fill="none" stroke="#9a9dc8" stroke-width="1.8" stroke-linecap="round" stroke-linejoin="round"/></svg>
<svg class="a" style="left:664px;top:1271px" width="1801" height="93" viewBox="0 0 1801 93"><rect x="1.5" y="1.5" width="1798" height="90" rx="13" fill="#f0f0fa" stroke="#c4c8ee" stroke-width="2.6" stroke-dasharray="6.5 3.5"/></svg>
<svg class="a" style="left:1323px;top:1303px" width="32" height="30" viewBox="0 0 32 30"><path d="M5 2H26a3 3 0 0 1 3 3V20.5a3 3 0 0 1-3 3H20.5L18 27L14.2 23.5H5a3 3 0 0 1-3-3V5a3 3 0 0 1 3-3Z" fill="#0b0f3a"/><text x="15.5" y="18.5" font-family="Liberation Sans" font-weight="700" font-size="14" fill="#fff" text-anchor="middle">?</text></svg>
<div class="t " style="top:1307.96px;font-size:20.5px;color:#0b0f3a;left:1364.40px;-webkit-text-stroke:0.4px #0b0f3a;">Help us make analytics better!</div>
<div class="t " style="top:1307.96px;font-size:20.5px;color:#2a6ad8;left:1651.50px;-webkit-text-stroke:0.3px #2a6ad8;">Give feedback</div>
<svg class="a" style="left:1788px;top:1310px" width="16" height="16" viewBox="0 0 16 16"><path d="M2 8H13.5M9 3.5L13.5 8L9 12.5" fill="none" stroke="#2a6ad8" stroke-width="1.6" stroke-linecap="round" stroke-linejoin="round"/></svg>
<div class="a" style="left:2306.00px;top:1354.60px;width:208.00px;height:71.40px;background:#0a0e30;border-radius:14px 14px 0 0;"></div>
<svg class="a" style="left:2322px;top:1363px" width="30" height="28" viewBox="0 0 30 28"><path d="M12 19.2H5.4a2.5 2.5 0 0 1-2.5-2.5V5.3a2.5 2.5 0 0 1 2.5-2.5H23.2a2.5 2.5 0 0 1 2.5 2.5V13" fill="none" stroke="#fff" stroke-width="1.9" stroke-linecap="round"/><circle cx="9.4" cy="11.4" r="1.25" fill="#fff"/><circle cx="14.5" cy="11.4" r="1.25" fill="#fff"/><circle cx="19.7" cy="11.4" r="1.25" fill="#fff"/><rect x="13.5" y="17.6" width="13" height="5.4" rx="2.7" transform="rotate(-45 20 20.3)" fill="#0b0e2e" stroke="#fff" stroke-width="1.7"/></svg>
<div class="t " style="top:1366.99px;font-size:19.8px;color:#fff;left:2359.20px;-webkit-text-stroke:0.25px #fff;">Give Feedback</div>
</body></html>
